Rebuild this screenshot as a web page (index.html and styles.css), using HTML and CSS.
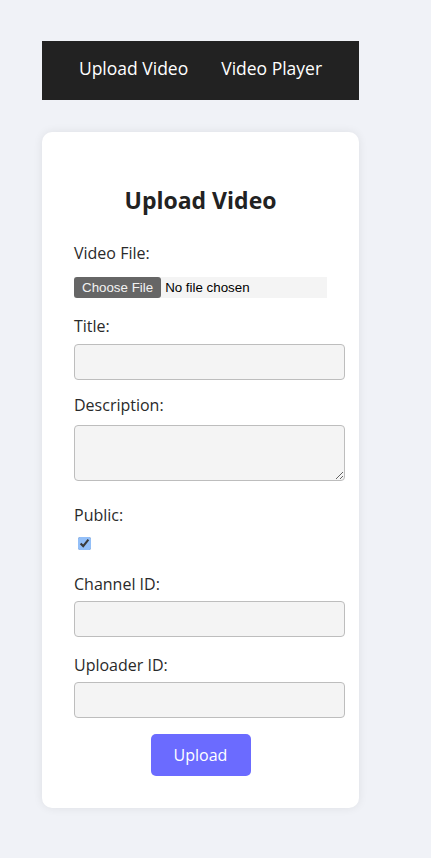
FILE: index.html
```html
<!DOCTYPE html>
<html lang="en">
<head>
<meta charset="utf-8">
<title>Upload Video</title>
<link rel="stylesheet" href="styles.css">
</head>
<body>
<div class="container">
  <nav class="nav">
    <a class="nav-link" href="#">Upload Video</a>
    <a class="nav-link" href="#">Video Player</a>
  </nav>
  <main class="card">
    <h2 class="card-title">Upload Video</h2>
    <form class="form">
      <label class="label label-file" for="file">Video File:</label>
      <input class="file-input" id="file" type="file">
      <label class="label label-title" for="title">Title:</label>
      <input class="text-input" id="title" type="text">
      <label class="label label-desc" for="desc">Description:</label>
      <textarea class="text-input textarea" id="desc"></textarea>
      <label class="label label-public" for="public">Public:</label>
      <input class="checkbox" id="public" type="checkbox" checked>
      <label class="label" for="channel">Channel ID:</label>
      <input class="text-input text-input-gap" id="channel" type="text">
      <label class="label" for="uploader">Uploader ID:</label>
      <input class="text-input" id="uploader" type="text">
      <button class="btn" type="button">Upload</button>
    </form>
  </main>
</div>
</body>
</html>
```
FILE: styles.css
```css
html, body {
  margin: 0;
  padding: 0;
}
body {
  background: #f0f2f7;
  font-family: "Open Sans", "Noto Sans", sans-serif;
  color: #222;
}
.container {
  width: 317px;
  margin-left: 42px;
  padding-top: 41px;
  padding-bottom: 50px;
}
.nav {
  background: #222222;
  height: 59px;
  box-sizing: border-box;
  padding: 17px 0 22px;
  display: flex;
  justify-content: center;
  gap: 33px;
}
.nav-link {
  color: #ffffff;
  text-decoration: none;
  font-size: 17.5px;
  line-height: 20px;
}
.card {
  display: block;
  margin-top: 32px;
  background: #ffffff;
  border-radius: 10px;
  box-shadow: 0 0 10px rgba(0, 0, 0, 0.08);
  padding: 32px;
}
.card-title {
  margin: 22px 0 30px;
  font-size: 23px;
  line-height: 28px;
  font-weight: 700;
  text-align: center;
  color: #222;
}
.form {
  display: flex;
  flex-direction: column;
  align-items: flex-start;
}
.label {
  display: block;
  font-size: 16px;
  line-height: 18px;
  color: #2a2a2a;
  margin-bottom: 8px;
}
.label-file {
  margin-bottom: 15px;
}
.label-title {
  margin-bottom: 9px;
}
.label-desc {
  margin-bottom: 11px;
}
.label-public {
  margin-bottom: 10px;
}
.file-input {
  display: block;
  width: 100%;
  height: 21px;
  margin: 0 0 19px;
  padding: 0;
  border: none;
  background: #f4f4f4;
  font-family: "Liberation Sans", Arial, sans-serif;
  font-size: 13.333px;
  color: #000;
}
.file-input::file-selector-button {
  height: 21px;
  margin: 0 4px 0 0;
  padding: 0 8px;
  border: none;
  border-radius: 3px;
  background: #666666;
  color: #f2f2f2;
  font-family: "Liberation Sans", Arial, sans-serif;
  font-size: 13.333px;
}
.text-input {
  display: block;
  box-sizing: content-box;
  width: 100%;
  height: 18px;
  margin: 0 0 16px;
  padding: 8px;
  border: 1px solid #bdbdbd;
  border-radius: 4px;
  background: #f4f4f4;
  font-family: "Open Sans", sans-serif;
  font-size: 16px;
}
.text-input-gap {
  margin-bottom: 19px;
}
.textarea {
  height: 38px;
  margin-bottom: 25px;
}
.checkbox {
  display: block;
  width: 13px;
  height: 13px;
  margin: 3px 3px 25px 4px;
  accent-color: #93bff8;
}
.btn {
  align-self: center;
  width: 100px;
  height: 42px;
  border: none;
  border-radius: 5px;
  background: #6b6bff;
  color: #ffffff;
  font-family: "Open Sans", sans-serif;
  font-size: 16px;
  padding: 0;
}
```
